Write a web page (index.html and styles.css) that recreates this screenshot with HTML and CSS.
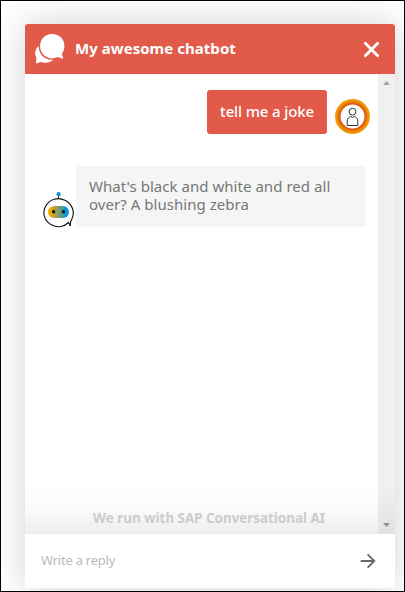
FILE: index.html
```html
<!DOCTYPE html>
<html lang="en">
<head>
<meta charset="utf-8">
<title>My awesome chatbot</title>
<link rel="stylesheet" href="styles.css">
</head>
<body>
<main class="chat">
  <header class="header">
    <svg class="logo" width="32" height="32" viewBox="0 0 32 32" fill="#fff">
      <path d="M4.8 13C1 16 .2 20.5 2.5 24.8L1.8 30.6L6.8 29C11.5 30.6 16.5 29.6 19.3 26.8C11.3 27.6 4.4 21.8 4.8 13Z"/>
      <path d="M18 1C25 1 30.4 6 30.4 12.8C30.4 16 29.5 18.5 27.9 20.7L29.3 25.7L23.5 24C13.5 28.5 6 21 6.1 13C6.2 6 11 1 18 1Z"/>
    </svg>
    <h1 class="title">My awesome chatbot</h1>
    <svg class="close" width="17" height="17" viewBox="0 0 17 17" fill="none" stroke="#fff" stroke-width="2.8" stroke-linecap="round"><path d="M2.3 2.3L14.7 14.7M14.7 2.3L2.3 14.7"/></svg>
  </header>
  <section class="body">
    <div class="messages">
      <div class="row user">
        <p class="bubble sent">tell me a joke</p>
        <svg class="avatar" width="36" height="36" viewBox="0 0 36 36">
          <defs><radialGradient id="ring"><stop offset=".68" stop-color="#dc4b0d"/><stop offset=".8" stop-color="#e66f08"/><stop offset=".9" stop-color="#ed9506"/><stop offset="1" stop-color="#eea009"/></radialGradient></defs>
          <circle cx="17.5" cy="17.5" r="17.5" fill="url(#ring)"/>
          <circle cx="17.5" cy="17.5" r="12" fill="#fff"/>
          <g fill="none" stroke="#333" stroke-width="1"><circle cx="17.5" cy="12.7" r="3.4"/><path d="M12.2 26.5V22C12.2 19.5 14 18 16 17.5L17.5 18.5L19 17.5C21 18 22.8 19.5 22.8 22V26.5Z"/></g>
        </svg>
      </div>
      <div class="row bot">
        <svg class="robot" width="32" height="37" viewBox="0 0 32 37">
          <defs><linearGradient id="face"><stop offset="0" stop-color="#f0ab00"/><stop offset=".22" stop-color="#e8aa09"/><stop offset=".25" stop-color="#b9a33b"/><stop offset=".48" stop-color="#91a05a"/><stop offset=".51" stop-color="#6b9e79"/><stop offset=".74" stop-color="#4c9b9c"/><stop offset=".78" stop-color="#079bdc"/><stop offset="1" stop-color="#0995dd"/></linearGradient></defs>
          <path d="M15.6 4V7.5" stroke="#222"/>
          <circle cx="15.6" cy="3.2" r="2.1" fill="#0995d3"/>
          <path d="M25.5 31.5C21 35.8 14.5 37 9 34.1C1.5 30.4-1.2 22 2.6 15.3C6.4 8.4 14.8 5.7 22 9.2C29.2 12.8 32.2 20.9 28.9 28.1C28 30 27.4 30.8 27.4 32.2V35.1Z" fill="#fff" stroke="#111" stroke-width="1.1"/>
          <rect x="5" y="15" width="21" height="12" rx="6" fill="url(#face)"/>
          <circle cx="10.6" cy="20.8" r="1.7" fill="#111"/><circle cx="20.5" cy="20.8" r="1.7" fill="#111"/>
        </svg>
        <p class="bubble received">What's black and white and red all<br>over? A blushing zebra</p>
      </div>
      <p class="credit">We run with SAP Conversational AI</p>
    </div>
    <div class="scrollbar">
      <svg width="7" height="4" viewBox="0 0 7 4" fill="#a3a3a3"><path d="M0 4L3.5 0L7 4Z"/></svg>
      <svg width="7" height="4" viewBox="0 0 7 4" fill="#909090"><path d="M0 0L3.5 4L7 0Z"/></svg>
    </div>
  </section>
  <footer class="composer">
    <span class="hint">Write a reply</span>
    <svg width="16" height="16" viewBox="0 0 16 16" fill="none" stroke="#666" stroke-width="1.8"><path d="M.7 8H14.2M7.6 1.3L14.3 8L7.6 14.7"/></svg>
  </footer>
</main>
</body>
</html>
```
FILE: styles.css
```css
* { box-sizing: border-box; }
body {
  margin: 0;
  height: 592px;
  padding: 23px 9px 0 24px;
  border: 1px solid #000;
  overflow: hidden;
  background: #fff;
  font-family: "Noto Sans", sans-serif;
}
h1, p { margin: 0; }
svg { display: block; flex: none; }
.chat {
  width: 370px;
  height: 564px;
  display: flex;
  flex-direction: column;
  border-radius: 3px;
  box-shadow: 0 0 36px rgba(0, 0, 0, .18);
}
.header {
  height: 50px;
  flex: none;
  display: flex;
  align-items: center;
  padding: 0 15px 0 9px;
  border-radius: 3px 3px 0 0;
  background: #e15a4a;
  color: #fff;
}
.title {
  margin: 0 0 2px 9px;
  font-size: 15px;
  letter-spacing: .04px;
  line-height: 20px;
  font-weight: 700;
  white-space: nowrap;
}
.close { margin-left: auto; }
.body { flex: 1; display: flex; background: #fff; }
.messages {
  width: 353px;
  padding-top: 16px;
  display: flex;
  flex-direction: column;
}
.row { display: flex; }
.user { justify-content: flex-end; padding-right: 7px; }
.avatar { margin: 9px 0 0 8px; }
.bubble { border-radius: 3px; font-size: 15px; line-height: 18px; white-space: nowrap; }
.sent { width: 120px; height: 44px; padding: 12px 13px; background: #e15a4a; color: #fff; font-weight: 500; letter-spacing: -.12px; }
.bot { margin-top: 31px; padding-left: 18px; }
.robot { margin-top: 25px; }
.received { width: 290px; height: 61px; margin-left: 1px; padding: 11px 13px; background: #f5f5f5; color: #777; letter-spacing: .04px; }
.credit {
  height: 60px;
  margin-top: auto;
  padding-top: 34px;
  padding-left: 15px;
  background: linear-gradient(#fff 15%, #fbfbfb 55%, #eee);
  color: #ccc;
  font-size: 13.4px;
  line-height: 20px;
  font-weight: 700;
  text-align: center;
  white-space: nowrap;
}
.scrollbar {
  width: 17px;
  padding: 7px 0 7px 5px;
  display: flex;
  flex-direction: column;
  justify-content: space-between;
  background: linear-gradient(#f0f0f0 90%, #e2e2e2);
}
.composer {
  height: 54px;
  display: flex;
  align-items: center;
  justify-content: space-between;
  padding: 0 19px 0 16px;
  border-radius: 0 0 3px 3px;
  background: #fff;
}
.hint { margin-bottom: 3px; color: #bbb; font-size: 13px; line-height: 18px; letter-spacing: -.24px; }
```
